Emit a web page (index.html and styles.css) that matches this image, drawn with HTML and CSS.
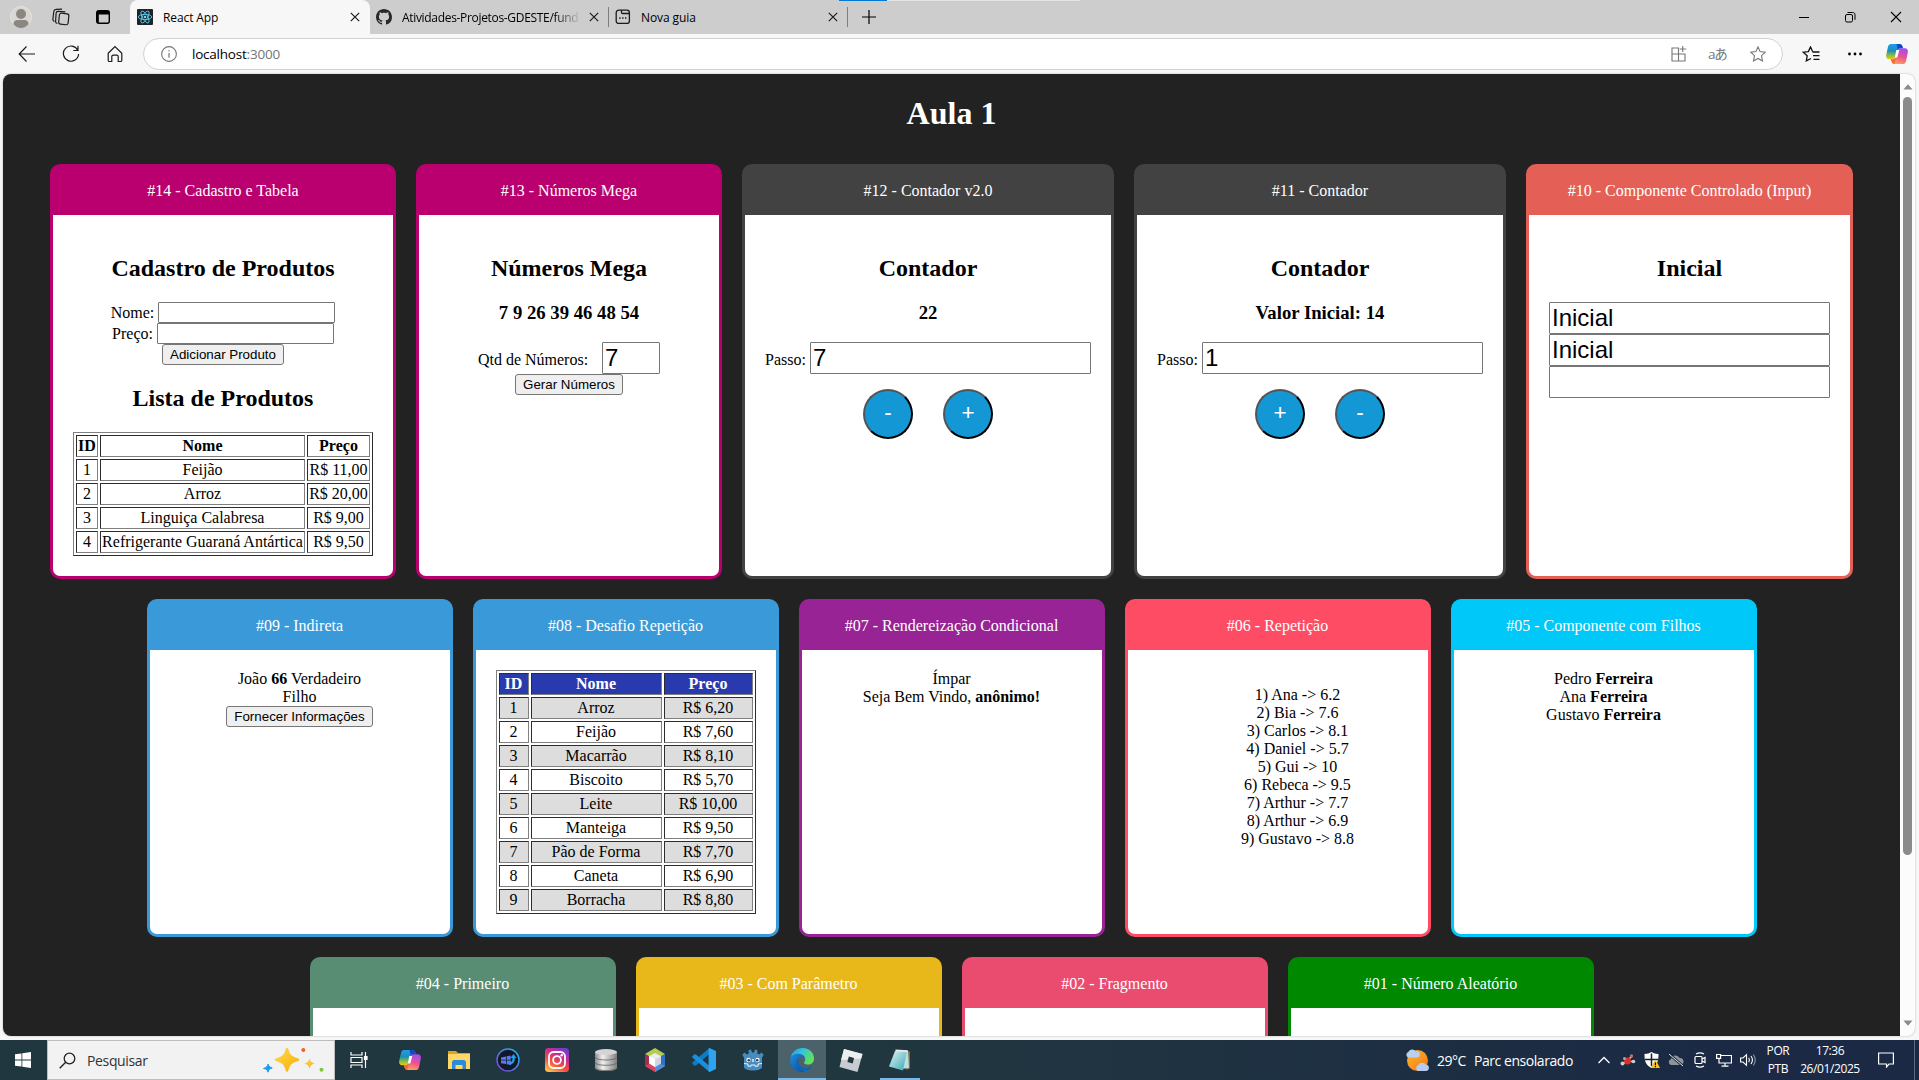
FILE: index.html
```html
<!DOCTYPE html>
<html lang="pt-BR">
<head>
<meta charset="utf-8">
<title>React App</title>
<link rel="stylesheet" href="styles.css">
</head>
<body>
<svg class="defs" width="0" height="0" aria-hidden="true">
  <defs>
    <linearGradient id="cpBlue" x1="0" y1="0" x2="0" y2="1"><stop offset="0" stop-color="#1f9cf0"/><stop offset=".45" stop-color="#1b8fb8"/><stop offset=".75" stop-color="#8bbf3a"/><stop offset="1" stop-color="#f5c518"/></linearGradient>
    <linearGradient id="cpPink" x1=".6" y1="0" x2=".3" y2="1"><stop offset="0" stop-color="#a04df0"/><stop offset=".5" stop-color="#ee5290"/><stop offset="1" stop-color="#ffa552"/></linearGradient>
    <linearGradient id="insta" x1=".2" y1="1" x2=".8" y2="0"><stop offset="0" stop-color="#fdc04b"/><stop offset=".35" stop-color="#f7503a"/><stop offset=".65" stop-color="#cf2b8c"/><stop offset="1" stop-color="#6a3fd0"/></linearGradient>
    <linearGradient id="disk" x1="0" y1="0" x2="1" y2="0"><stop offset="0" stop-color="#8d8d8d"/><stop offset=".35" stop-color="#f0f0f0"/><stop offset="1" stop-color="#7f7f7f"/></linearGradient>
    <linearGradient id="edgeTop" x1="0" y1="0" x2="1" y2=".5"><stop offset="0" stop-color="#1f9de0"/><stop offset=".5" stop-color="#36c6d8"/><stop offset="1" stop-color="#62e05a"/></linearGradient>
    <linearGradient id="edgeLow" x1="0" y1="0" x2="1" y2="1"><stop offset="0" stop-color="#1b8be0"/><stop offset="1" stop-color="#0c4f9c"/></linearGradient>
    <linearGradient id="star" x1="0" y1="0" x2="1" y2="1"><stop offset="0" stop-color="#ffd84a"/><stop offset="1" stop-color="#f5b10c"/></linearGradient>
    <linearGradient id="sun" x1="0" y1="0" x2="1" y2="1"><stop offset="0" stop-color="#ffb52b"/><stop offset="1" stop-color="#f07a17"/></linearGradient>
    <linearGradient id="note" x1="0" y1="0" x2="1" y2="1"><stop offset="0" stop-color="#d9f3f5"/><stop offset="1" stop-color="#3fa7b5"/></linearGradient>
    <linearGradient id="ring" x1="0" y1="1" x2="1" y2="0"><stop offset="0" stop-color="#7a3fe0"/><stop offset="1" stop-color="#22b8e8"/></linearGradient>
    <symbol id="copilot" viewBox="0 0 22 20">
      <path d="M5 0h8.500c1.700 0 2.500 1 3 2.500l.4 1.500h-2.400c-1.600 0-2.300.8-2.700 2.200L10 12.500c-.5 1.800-1.400 2.700-3 2.700H3C.8 15.200-.2 13.300.2 11L2 2.800C2.500.9 3.500 0 5 0z" fill="url(#cpBlue)"/>
      <path d="M10.500 0h3c1.700 0 2.500 1 3 2.500l.5 2h-2.500c-1.400 0-2 .6-2.500 1.700z" fill="#1646c8"/>
      <path d="M17 20H8.500c-1.700 0-2.400-1-2.900-2.500l-.8-2.300h2.300c1.600 0 2.400-.9 2.900-2.700l1.800-6.300c.5-1.500 1.200-1.900 2.700-1.900H19c2.200 0 3.200 1.900 2.800 4.200L20 17.200c-.5 1.900-1.500 2.800-3 2.800z" fill="url(#cpPink)"/>
      <path d="M4.800 15.200h2.300c1.500 0 2.300-.8 2.800-2.300L8.500 20c-1.700 0-2.400-1-2.900-2.500z" fill="#f5693c"/>
      <path d="M10.300 6h3l-2 7.500H8.800z" fill="#fff"/>
    </symbol>
    <symbol id="close" viewBox="0 0 10 10"><path d="M.8.8l8.400 8.400M9.200.8L.8 9.200" stroke="#1b1b1b" stroke-width="1.200" fill="none"/></symbol>
  </defs>
</svg>

<header class="tabstrip">
  <div class="window-tools">
    <svg class="avatar" viewBox="0 0 22 22"><circle cx="11" cy="11" r="10.500" fill="#dad6d2" stroke="#e6e2dc"/><circle cx="11" cy="8" r="5" fill="#8c8680"/><path d="M3.500 18.200c0-3 2-4.200 4-4.200h7c2 0 4 1.200 4 4.200A10.500 10.500 0 0 1 11 22a10.500 10.500 0 0 1-7.500-3.800z" fill="#8c8680"/></svg>
    <svg class="workspaces" viewBox="0 0 18 18" fill="none" stroke="#1b1b1b" stroke-width="1.200"><rect x="7" y="5.500" width="9.500" height="11" rx="2" transform="rotate(6 12 11)"/><path d="M5.500 15.500c-1.400-.3-2-1-1.900-2.300l.5-8c.1-1.300.9-2 2.200-1.900l7 .5M2.500 13.500C1.200 13 .7 12.200.9 11l.9-7.500C2 2 2.700 1.400 4 1.400l6-.3"/></svg>
    <svg class="vtabs" viewBox="0 0 14 14"><rect x=".7" y=".7" width="12.600" height="12.600" rx="2" fill="none" stroke="#000" stroke-width="1.400"/><path d="M1 1h12v3.500H1zM1 4h1.800v9H1z"/></svg>
  </div>
  <div class="tab tab-active">
    <svg class="favicon" viewBox="0 0 16 16"><rect width="16" height="16" rx="1" fill="#20232a"/><g fill="none" stroke="#61dafb" stroke-width=".8"><ellipse cx="8" cy="8" rx="6.700" ry="2.600"/><ellipse cx="8" cy="8" rx="6.700" ry="2.600" transform="rotate(60 8 8)"/><ellipse cx="8" cy="8" rx="6.700" ry="2.600" transform="rotate(120 8 8)"/></g><circle cx="8" cy="8" r="1.300" fill="#61dafb"/></svg>
    <span class="tab-title">React App</span>
    <svg class="tab-close"><use href="#close"/></svg>
  </div>
  <div class="tab">
    <svg class="favicon" viewBox="0 0 16 16"><path fill="#24292f" d="M8 0C3.580 0 0 3.580 0 8c0 3.540 2.290 6.530 5.470 7.590.4.070.55-.17.55-.38 0-.19-.01-.82-.01-1.490-2.010.37-2.530-.49-2.690-.94-.09-.23-.48-.94-.82-1.130-.28-.15-.68-.52-.01-.53.63-.01 1.080.58 1.230.82.720 1.210 1.870.87 2.330.66.070-.52.280-.87.510-1.070-1.780-.2-3.640-.89-3.640-3.950 0-.87.310-1.590.82-2.150-.08-.2-.36-1.020.08-2.120 0 0 .67-.21 2.200.82.640-.18 1.320-.27 2-.27s1.360.09 2 .27c1.530-1.040 2.200-.82 2.200-.82.440 1.100.16 1.920.08 2.120.51.560.82 1.270.82 2.150 0 3.070-1.870 3.750-3.650 3.950.29.250.54.730.54 1.480 0 1.070-.01 1.930-.01 2.200 0 .21.150.46.550.38A8.010 8.010 0 0 0 16 8c0-4.420-3.580-8-8-8z"/></svg>
    <span class="tab-title tab-fade">Atividades-Projetos-GDESTE/fund</span>
    <svg class="tab-close"><use href="#close"/></svg>
  </div>
  <div class="tab tab-sep">
    <svg class="favicon" viewBox="0 0 16 16" fill="none" stroke="#1b1b1b" stroke-width="1.300"><rect x="1.200" y="1.200" width="13.200" height="13.200" rx="2.500"/><path d="M6.500 1v2.300c0 .8.400 1.200 1.200 1.200h6.500M4.200 9h1.400M7.100 9h1.400M10 9h1.400" /></svg>
    <span class="tab-title">Nova guia</span>
    <svg class="tab-close"><use href="#close"/></svg>
  </div>
  <div class="newtab"><svg viewBox="0 0 14 14"><path d="M7 0v14M0 7h14" stroke="#000" stroke-width="1.200"/></svg></div>
  <div class="progress"><i></i></div>
  <div class="win-buttons">
    <svg viewBox="0 0 12 12"><path d="M1 6.500h10" stroke="#000"/></svg>
    <svg viewBox="0 0 12 12" fill="none" stroke="#000"><rect x="1.500" y="3.500" width="7" height="7.500" rx="1.500"/><path d="M3.500 1.500h5c1.500 0 2.500.8 2.500 2.300v5"/></svg>
    <svg viewBox="0 0 12 12"><path d="M1 1l10 10M11 1L1 11" stroke="#000" stroke-width="1.100"/></svg>
  </div>
</header>

<nav class="toolbar">
  <div class="nav-buttons">
    <svg viewBox="0 0 18 18"><path d="M17 9H1.500M8.500 1.500L1.200 9l7.300 7.500"/></svg>
    <svg viewBox="0 0 18 18"><path d="M15.800 5.200A7.600 7.600 0 1 0 16.600 9M16 .8v4.700h-4.700"/></svg>
    <svg viewBox="0 0 18 18"><path d="M2.200 8.200L9 1.600l6.800 6.600v7c0 .8-.4 1.300-1.200 1.300h-2.400v-5c0-1-.5-1.400-1.400-1.400H7.200c-.9 0-1.400.4-1.400 1.400v5H3.400c-.8 0-1.200-.5-1.200-1.300z"/></svg>
  </div>
  <div class="address">
    <svg class="info" viewBox="0 0 16 16"><circle cx="8" cy="8" r="7.400" fill="none" stroke="#767676" stroke-width="1.100"/><path d="M8 7v4.800M8 4.200v1.300" stroke="#767676" stroke-width="1.200"/></svg>
    <span class="url">localhost<b>:3000</b></span>
    <div class="address-icons">
      <svg viewBox="0 0 16 16"><path d="M8 2H1v13h13V8H1M7.500 2v13M11.700 0v6M8.700 3h6.500"/></svg>
      <span class="translate">aあ</span>
      <svg viewBox="0 0 16 16"><path d="M8 .9l2.100 4.700 5.200.6-3.800 3.500 1 5.200L8 12.400l-4.500 2.500 1-5.200L.7 6.200l5.200-.6z"/></svg>
    </div>
  </div>
  <div class="tool-icons">
    <svg viewBox="0 0 18 16"><path d="M9 12.500l-4.700 2.400.9-5.200L1.200 6.200l5.200-.6L8.500.9l2.100 4.500M10.500 6h7M11 9.700h6.500M11.500 13.300h6" fill="none" stroke="#111" stroke-width="1.300"/></svg>
    <svg viewBox="0 0 18 16"><circle cx="3.500" cy="8" r="1.400"/><circle cx="9" cy="8" r="1.400"/><circle cx="14.500" cy="8" r="1.400"/></svg>
    <svg class="copilot-btn"><use href="#copilot"/></svg>
  </div>
</nav>

<main class="viewport">
  <div class="page">
    <h1>Aula 1</h1>
    <div class="cards">
      <section class="card magenta w346">
        <div class="title">#14 - Cadastro e Tabela</div>
        <div class="content">
          <h2>Cadastro de Produtos</h2>
          <div class="field"><label>Nome: </label><input type="text"></div>
          <div class="field"><label>Preço: </label><input type="text"></div>
          <div class="field"><button class="plain b122">Adicionar Produto</button></div>
          <h2>Lista de Produtos</h2>
          <table border="1" class="products">
            <colgroup><col class="c22"><col class="c205"><col></colgroup>
            <tr><th>ID</th><th>Nome</th><th>Preço</th></tr>
            <tr><td>1</td><td>Feijão</td><td>R$ 11,00</td></tr>
            <tr><td>2</td><td>Arroz</td><td>R$ 20,00</td></tr>
            <tr><td>3</td><td>Linguiça Calabresa</td><td>R$ 9,00</td></tr>
            <tr><td>4</td><td>Refrigerante Guaraná Antártica</td><td>R$ 9,50</td></tr>
          </table>
        </div>
      </section>
      <section class="card magenta">
        <div class="title">#13 - Números Mega</div>
        <div class="content">
          <h2>Números Mega</h2>
          <h3>7 9 26 39 46 48 54</h3>
          <div class="big-field"><label>Qtd de Números: </label><input class="short" type="text" value="7"></div>
          <div class="field"><button class="plain b108">Gerar Números</button></div>
        </div>
      </section>
      <section class="card gray w372">
        <div class="title">#12 - Contador v2.0</div>
        <div class="content">
          <h2>Contador</h2>
          <h3>22</h3>
          <div class="big-field"><label>Passo: </label><input type="text" value="7"></div>
          <div class="steps"><button>-</button><button>+</button></div>
        </div>
      </section>
      <section class="card gray w372">
        <div class="title">#11 - Contador</div>
        <div class="content">
          <h2>Contador</h2>
          <h3>Valor Inicial: 14</h3>
          <div class="big-field"><label>Passo: </label><input type="text" value="1"></div>
          <div class="steps"><button>+</button><button>-</button></div>
        </div>
      </section>
      <section class="card coral w327">
        <div class="title">#10 - Componente Controlado (Input)</div>
        <div class="content">
          <h2>Inicial</h2>
          <div class="stack"><input type="text" value="Inicial"><input type="text" value="Inicial"><input type="text"></div>
        </div>
      </section>

      <section class="card blue">
        <div class="title">#09 - Indireta</div>
        <div class="content">
          <div>João <strong>66</strong> Verdadeiro</div>
          <div>Filho</div>
          <div class="field"><button class="plain b147">Fornecer Informações</button></div>
        </div>
      </section>
      <section class="card blue">
        <div class="title">#08 - Desafio Repetição</div>
        <div class="content">
          <table border="1" class="striped">
            <colgroup><col class="c30"><col class="c131"><col></colgroup>
            <tr><th>ID</th><th>Nome</th><th>Preço</th></tr>
            <tr><td>1</td><td>Arroz</td><td>R$ 6,20</td></tr>
            <tr><td>2</td><td>Feijão</td><td>R$ 7,60</td></tr>
            <tr><td>3</td><td>Macarrão</td><td>R$ 8,10</td></tr>
            <tr><td>4</td><td>Biscoito</td><td>R$ 5,70</td></tr>
            <tr><td>5</td><td>Leite</td><td>R$ 10,00</td></tr>
            <tr><td>6</td><td>Manteiga</td><td>R$ 9,50</td></tr>
            <tr><td>7</td><td>Pão de Forma</td><td>R$ 7,70</td></tr>
            <tr><td>8</td><td>Caneta</td><td>R$ 6,90</td></tr>
            <tr><td>9</td><td>Borracha</td><td>R$ 8,80</td></tr>
          </table>
        </div>
      </section>
      <section class="card purple">
        <div class="title">#07 - Rendereização Condicional</div>
        <div class="content">
          <div>Ímpar</div>
          <div>Seja Bem Vindo, <strong>anônimo!</strong></div>
        </div>
      </section>
      <section class="card red">
        <div class="title">#06 - Repetição</div>
        <div class="content">
          <ul>
            <li>1) Ana -&gt; 6.2</li><li>2) Bia -&gt; 7.6</li><li>3) Carlos -&gt; 8.1</li>
            <li>4) Daniel -&gt; 5.7</li><li>5) Gui -&gt; 10</li><li>6) Rebeca -&gt; 9.5</li>
            <li>7) Arthur -&gt; 7.7</li><li>8) Arthur -&gt; 6.9</li><li>9) Gustavo -&gt; 8.8</li>
          </ul>
        </div>
      </section>
      <section class="card cyan">
        <div class="title">#05 - Componente com Filhos</div>
        <div class="content">
          <div>Pedro <strong>Ferreira</strong></div>
          <div>Ana <strong>Ferreira</strong></div>
          <div>Gustavo <strong>Ferreira</strong></div>
        </div>
      </section>

      <section class="card green"><div class="title">#04 - Primeiro</div><div class="content tall"></div></section>
      <section class="card yellow"><div class="title">#03 - Com Parâmetro</div><div class="content tall"></div></section>
      <section class="card pink"><div class="title">#02 - Fragmento</div><div class="content tall"></div></section>
      <section class="card lime"><div class="title">#01 - Número Aleatório</div><div class="content tall"></div></section>
    </div>
  </div>
  <div class="scrollbar">
    <svg viewBox="0 0 10 6"><path d="M5 .3L9.600 5.600H.4z" fill="#8b8b8b"/></svg>
    <div class="thumb"></div>
    <svg viewBox="0 0 10 6"><path d="M5 5.700L9.600.4H.4z" fill="#8b8b8b"/></svg>
  </div>
</main>

<footer class="taskbar">
  <div class="start"><svg viewBox="0 0 16 16" fill="#fff"><path d="M0 2.300l6.500-.9v6.100H0zM7.300 1.300L16 0v7.500H7.300zM0 8.400h6.500v6.200L0 13.700zM7.300 8.400H16V16l-8.700-1.300z"/></svg></div>
  <div class="search">
    <svg class="lens" viewBox="0 0 17 17"><circle cx="10.500" cy="6.500" r="5.300" fill="none" stroke="#222" stroke-width="1.300"/><path d="M6.700 10.300L.7 16.300" stroke="#222" stroke-width="1.400"/></svg>
    <span>Pesquisar</span>
    <svg class="sparkles" viewBox="0 0 62 26"><path d="M24 2c1.500 6.500 4 9 11 10.800-7 1.700-9.500 4.200-11 10.700-1.500-6.500-4-9-11-10.700C20 11 22.500 8.500 24 2z" fill="url(#star)" stroke="url(#star)" stroke-width="2.500" stroke-linejoin="round"/><path d="M46.500 11c.8 3.500 2 4.700 5.500 5.500-3.500.8-4.700 2-5.500 5.500-.8-3.500-2-4.700-5.500-5.500 3.500-.8 4.700-2 5.500-5.500z" fill="url(#star)"/><path d="M5.200 17c.5 2.500 1.300 3 4 4-2.700.7-3.300 1.500-4.200 4.200C4.200 22.500 3.400 22 .5 21.500c2.900-1 3.700-1.700 4.700-4.500z" fill="#12a0ec" stroke="#12a0ec"/><circle cx="40.300" cy="3" r="2" fill="#f2602c"/><circle cx="58.500" cy="22.700" r="2" fill="#83c341"/></svg>
  </div>
  <div class="apps">
    <div class="app"><svg viewBox="0 0 24 24" fill="none" stroke="#fff" stroke-width="1.200"><path d="M4 4v3h11V4M4 20v-3h11v3M4 9.500h11v5H4zM18.500 4v16"/><path d="M17.500 8.500h2.500v3h-2.500z" fill="#fff"/></svg></div>
    <div class="app"><svg viewBox="0 0 24 24"><use href="#copilot" x="1" y="2" width="22" height="20"/></svg></div>
    <div class="app"><svg viewBox="0 0 24 24"><path d="M1 3h8l2 2h12v4H1z" fill="#e0a21a"/><path d="M1 6h22v15H1z" fill="#ffd668"/><path d="M5 21v-6.500c0-1.500 1-2.500 2.500-2.500h9c1.500 0 2.500 1 2.500 2.500V21h-3.500v-4h-7v4z" fill="#2b8bd8"/></svg></div>
    <div class="app"><svg viewBox="0 0 24 24"><circle cx="12" cy="12" r="11" fill="#131827" stroke="url(#ring)" stroke-width="1.500"/><path d="M5 9.500l5-1v3.300H5zM10.700 8.300l4-.8v4.300h-4zM5 12.500h5v3.600l-5-.8zM10.700 12.500H15V17l-4.300-.8z" fill="#5b79f0"/><path d="M14 15c2.500-1.500 2.500-3 2.500-5h-2l3-4 3 4h-1.700c0 4-1.500 5.500-4.800 7z" fill="#1fa3e8"/></svg></div>
    <div class="app"><svg viewBox="0 0 24 24"><rect width="24" height="24" rx="3.500" fill="url(#insta)"/><g fill="none" stroke="#fff" stroke-width="1.800"><rect x="4" y="4" width="16" height="16" rx="4.500"/><circle cx="12" cy="12" r="3.900"/></g><circle cx="16.700" cy="7.300" r="1.200" fill="#fff"/></svg></div>
    <div class="app"><svg viewBox="0 0 24 24"><path d="M1 4v16c0 4 22 4 22 0V4z" fill="url(#disk)"/><path d="M1 9c0 4 22 4 22 0M1 14.300c0 4 22 4 22 0M1 19.500c0 4 22 4 22 0" fill="none" stroke="#5f5f5f" stroke-width=".8"/><ellipse cx="12" cy="4" rx="11" ry="3" fill="#d4d4d4"/></svg></div>
    <div class="app"><svg viewBox="0 0 24 24"><path d="M12 0l10 6-10 6L2 6z" fill="#b5cc50"/><path d="M2 6l10 6v12L2 18z" fill="#a52d50"/><path d="M22 6l-10 6v12l10-6z" fill="#2f6fc8"/><path d="M2 18l10-5 10 5-10 6z" fill="#d8445c"/><path d="M12 13v11l10-6z" fill="#4b8fe0"/><path d="M12 5l6 3.300v7L12 19l-6-3.700v-7z" fill="#e9edef"/><path d="M6 8.300l6 3.200V19l-6-3.700z" fill="#fff"/><path d="M18 8.300l-6 3.200V19l6-3.700z" fill="#cfd7dc"/></svg></div>
    <div class="app"><svg viewBox="0 0 24 24"><path d="M17.500 0v6L4 17.500l-1.400.2L.3 15.800v-1.300z" fill="#0a7cc9"/><path d="M17.500 24v-6L4 6.500l-1.400-.2L.3 8.200v1.300z" fill="#1a8fdc"/><path d="M17.500 0L24 3v18l-6.500 3c-.6 0-.9-.5-.9-1V1c0-.6.300-1 .9-1z" fill="#2ea3f0"/></svg></div>
    <div class="app"><svg viewBox="0 0 24 24"><path d="M10 1.500l1 3h2l1-3 2.500.8-.2 3.200 1.700 1 2.500-2 2.200 2.300-1.700 3V19c0 2-4.500 3.500-9 3.500S3 21 3 19V9.800l-1.700-3 2.200-2.300 2.500 2 1.700-1-.2-3.200z" fill="#478cbf"/><circle cx="7.500" cy="12" r="2.200" fill="#fff"/><circle cx="16.500" cy="12" r="2.200" fill="#fff"/><circle cx="7.800" cy="12.200" r="1.300" fill="#3c4043"/><circle cx="16.200" cy="12.200" r="1.300" fill="#3c4043"/><path d="M12 11v3" stroke="#fff" stroke-width="1.300"/><path d="M3 15.500l4 .5v2.200h3V17h4v1.200h3V16l4-.5" fill="none" stroke="#fff" stroke-width=".9"/></svg></div>
    <div class="app app-on"><svg viewBox="0 0 24 24"><path d="M.5 10.500C1.500 4 6.500 0 12.500 0 19 0 24 4.500 24 10.500c0 4-2.500 6-5.700 6-2.500 0-4.300-.8-4.300-1.800 0-.7 1.200-1.200 1.200-3.200 0-3-3-4.800-6.700-4.800-3.500 0-6.500 1.500-8 3.800z" fill="url(#edgeTop)"/><path d="M0 12.200C0 8 3.800 5.700 8 5.700c3.500 0 6.200 1.500 7 4-1-1-2.300-1.300-3.500-1.300C8 8.400 6 12 6.800 15.500c.8 4 4.200 7.200 8 7.700C13.900 23.700 13 24 12 24 5.500 24 0 18.700 0 12.200z" fill="url(#edgeLow)"/><path d="M8.900 10.300C7 15.500 10.700 20 15.800 20c2 0 4-.7 5.600-1.900.5-.3.900.1.600.6-1.600 2.600-4.300 4.600-7.200 4.600-4.800-.3-8.300-4.400-8.200-8.800 0-1.700.9-3.300 2.300-4.200z" fill="#1262b5"/></svg></div>
    <div class="app"><svg viewBox="0 0 24 24"><path d="M5 1l18.500 5L18.500 24 .5 19z" fill="#c8ccd2"/><path d="M5 1l18.500 5-1.300 4.500L2 12z" fill="#eceef0"/><path d="M9.800 8.600l5.300 1.500-1.400 5.300-5.300-1.500z" fill="#22363f"/></svg></div>
    <div class="app app-run"><svg viewBox="0 0 24 24"><path d="M18 2.500l4 1v17L18 22z" fill="#8a6a35"/><path d="M8 2.500h12L21 20l-8 1z" fill="#b7dfe4"/><path d="M7 3h12l-4 19.500L1 18.500z" fill="url(#note)"/><path d="M7.500 1.500l12 .8v1.600l-12-.4z" fill="#e8e8e8"/></svg></div>
  </div>
  <div class="tray">
    <svg class="weather" viewBox="0 0 24 24"><circle cx="12.500" cy="12.500" r="10.500" fill="url(#sun)"/><path d="M3 9.500a3 3 0 0 1 .3-5.500A4.500 4.500 0 0 1 11 3.500a3 3 0 0 1 1.500 6z" fill="#b9d0f0"/><path d="M13 23a3.300 3.300 0 0 1 .3-6 4.500 4.500 0 0 1 7.700-.3 3.200 3.200 0 0 1 .5 6.300z" fill="#b4ccf2"/></svg>
    <span class="temp">29°C</span><span class="sky">Parc ensolarado</span>
    <div class="tray-icons">
      <svg viewBox="0 0 16 16"><path d="M2.500 11L8 5.500l5.500 5.500" fill="none" stroke="#fff" stroke-width="1.300"/></svg>
      <svg viewBox="0 0 16 16"><path d="M2 12l5-3M9 9l5 1M8 8l4-4" stroke="#ddd" stroke-width="1.500"/><circle cx="7.500" cy="9" r="3.500" fill="#d8302a"/><circle cx="2.500" cy="11.500" r="2" fill="#ccc"/><circle cx="13.500" cy="9.500" r="1.800" fill="#ccc"/><circle cx="11.500" cy="4" r="1.700" fill="#c66"/><circle cx="4.500" cy="6.500" r="1.500" fill="#a9a9a9"/></svg>
      <svg viewBox="0 0 16 16"><path d="M7.500 0c2 1.300 4 2 7 2 0 7-1 11-7 14-6-3-7-7-7-14 3 0 5-.7 7-2z" fill="#fff"/><path d="M7.500 1.500V14M1 7.500h13" stroke="#14202e" stroke-width="1.500"/><path d="M11.500 7.500l4.500 8.500H6.500z" fill="#f8c21c"/><path d="M11.400 10.500v2.700M11.400 14v1.200" stroke="#000" stroke-width="1.100"/></svg>
      <svg viewBox="0 0 16 16"><path d="M3 13a3 3 0 0 1 0-5.800A4.500 4.500 0 0 1 11.500 6a3.600 3.600 0 0 1 1.500 7z" fill="#8c949e"/><path d="M1 2l14 12" stroke="#16243a" stroke-width="2.400"/><path d="M1 2l14 12" stroke="#e8e8e8" stroke-width="1"/></svg>
      <svg viewBox="0 0 16 16" fill="none" stroke="#fff" stroke-width="1.200"><rect x="3" y="4.500" width="7" height="7" rx="1"/><path d="M10 7l3-1.500v5L10 9M4 2c2.500-1.500 5.500-1.500 8 0M4 14c2.500 1.500 5.500 1.500 8 0"/></svg>
      <svg viewBox="0 0 16 16" fill="none" stroke="#fff" stroke-width="1.200"><path d="M5 3.500h10.500v7.500H3V7M9 11v3M5.500 14.200h7M.6 2.500h4v3.800h-4zM3 6v3"/></svg>
      <svg viewBox="0 0 16 16" fill="none" stroke="#fff" stroke-width="1.100"><path d="M.6 6v4H3l3.500 3.300V2.700L3 6zM8.700 5.700c1 1.500 1 3.100 0 4.600M11 4c1.800 2.500 1.800 5.500 0 8"/><path d="M13.300 2.500c2.500 3.500 2.500 7.500 0 11" stroke="#8c96a5"/></svg>
    </div>
    <div class="two-line lang"><span>POR</span><span>PTB</span></div>
    <div class="two-line clock"><span>17:36</span><span>26/01/2025</span></div>
    <svg class="notice" viewBox="0 0 16 16"><path d="M.6 1h14.800v11H11l-2.500 3v-3H.6z" fill="none" stroke="#fff" stroke-width="1.200"/></svg>
    <div class="show-desktop"></div>
  </div>
</footer>
</body>
</html>
```
FILE: styles.css
```css
* { box-sizing: border-box; }

body {
  margin: 0;
  width: 1919px;
  height: 1080px;
  overflow: hidden;
  display: flex;
  flex-direction: column;
  background: #f7f7f7;
  font-family: "Open Sans", "Noto Sans", sans-serif;
  color: #000;
}

svg { display: block; flex: none; }
.defs { position: absolute; }

/* Tab strip */
.tabstrip {
  height: 34px;
  flex: none;
  display: flex;
  background: #cdcdcd;
  font-size: 12px;
}
.window-tools {
  width: 130px;
  display: flex;
  align-items: center;
  padding-left: 10px;
}
.avatar { width: 22px; height: 22px; }
.workspaces { width: 18px; height: 18px; margin-left: 20px; }
.vtabs { width: 14px; height: 14px; margin-left: 26px; }
.tab {
  width: 238px;
  display: flex;
  align-items: center;
  padding: 0 9px 0 6px;
}
.tab-active {
  width: 240px;
  padding: 0 10px 0 7px;
  background: #f7f7f7;
  border-radius: 8px 8px 0 0;
}
.tab-sep {
  width: 240px;
  padding: 0 10px 0 7px;
  background:
    linear-gradient(#7d7d7d, #7d7d7d) 0 7px / 1px 20px no-repeat,
    linear-gradient(#7d7d7d, #7d7d7d) 100% 7px / 1px 20px no-repeat;
}
.favicon { width: 16px; height: 16px; }
.tab-title {
  flex: 1;
  margin: 0 13px 0 10px;
  white-space: nowrap;
  letter-spacing: -0.1px;
}
.tab-fade {
  margin-right: 8px;
  letter-spacing: -0.32px;
  -webkit-mask-image: linear-gradient(90deg, #000 85%, transparent);
  mask-image: linear-gradient(90deg, #000 85%, transparent);
}
.tab-close { width: 10px; height: 10px; }
.newtab { padding: 10px 14px; }
.newtab svg { width: 14px; height: 14px; }
.progress {
  width: 241px;
  height: 1px;
  margin-left: -51px;
  background: #e4e4e4;
}
.progress i { display: block; width: 48px; height: 1px; background: #0078d4; }
.win-buttons {
  margin-left: auto;
  margin-right: 17px;
  display: flex;
  align-items: center;
  gap: 34px;
}
.win-buttons svg { width: 12px; height: 12px; }

/* Address toolbar */
.toolbar { height: 40px; flex: none; display: flex; align-items: center; }
.nav-buttons { width: 143px; padding-left: 18px; display: flex; gap: 26px; }
.nav-buttons svg { width: 18px; height: 18px; fill: none; stroke: #1b1b1b; stroke-width: 1.2; }
.address {
  width: 1640px;
  height: 32px;
  display: flex;
  align-items: center;
  padding: 0 16px 0 17px;
  background: #fff;
  border: 1px solid #d1d1d1;
  border-radius: 16px;
}
.info { width: 16px; height: 16px; }
.url { margin-left: 15px; font-size: 13.5px; letter-spacing: -0.22px; }
.url b { font-weight: 400; color: #767676; }
.address-icons { margin-left: auto; display: flex; align-items: center; }
.address-icons svg { width: 16px; height: 16px; fill: none; stroke: #767676; stroke-width: 1.1; }
.translate {
  width: 18px;
  margin: 0 24px 0 21px;
  font: 13.5px/20px "Open Sans", "Noto Sans CJK JP", sans-serif;
  letter-spacing: -1.2px;
  color: #767676;
  white-space: nowrap;
}
.tool-icons { display: flex; align-items: center; gap: 26px; margin-left: 19px; }
.tool-icons svg { width: 18px; height: 16px; }
.tool-icons .copilot-btn { width: 22px; height: 20px; margin-left: -4px; }

/* Browser viewport */
.viewport {
  height: 962px;
  flex: none;
  margin: 0 4px 4px 3px;
  display: flex;
  overflow: hidden;
  background: #fcfcfc;
  border-radius: 8px;
  box-shadow: 0 0 2px rgba(0, 0, 0, .3);
}
.page {
  width: 1897px;
  height: 962px;
  flex: none;
  overflow: hidden;
  background: #222;
  font: 16px/18px "Liberation Serif", "Times New Roman", serif;
  text-align: center;
}
h1 { margin: 21.44px 0; color: #fff; font-size: 32px; line-height: 37px; }
h2 { margin: 19.92px 0; font-size: 24px; line-height: 27px; }
h3 { margin: 18.72px 0; font-size: 18.72px; line-height: 21px; }

.cards { display: flex; flex-wrap: wrap; justify-content: center; gap: 20px; margin-top: 31.56px; }
.card {
  width: 306px;
  display: flex;
  flex-direction: column;
  border: 3px solid var(--tone);
  border-radius: 10px;
  background: var(--tone);
}
.w346 { width: 346px; }
.w372 { width: 372px; }
.w327 { width: 327px; }
.title { height: 48px; padding-top: 15px; color: #fff; }
.content { flex: 1; padding: 20px; background: #fff; border-radius: 0 0 7px 7px; }
.content > h2:first-child { margin-top: 20px; }
.tall { min-height: 160px; }

.magenta { --tone: #b9006e; }
.gray { --tone: #424242; }
.coral { --tone: #e45f56; }
.blue { --tone: #3a9ad9; }
.purple { --tone: #982395; }
.red { --tone: #ff4c65; }
.cyan { --tone: #00c8f8; }
.green { --tone: #588c73; }
.yellow { --tone: #e8b71a; }
.pink { --tone: #ea4c6f; }
.lime { --tone: #008800; }

.field { height: 21px; display: flex; justify-content: center; }
.field label { padding-top: 2px; white-space: pre; line-height: 18px; }
input {
  margin: 0;
  padding: 1px 2px;
  border: 1px solid #767676;
  border-radius: 1px;
  background: #fff;
  color: #000;
}
.field input { width: 177px; height: 21px; }
.plain {
  height: 21px;
  padding: 0;
  border: 1px solid #767676;
  border-radius: 3px;
  background: #efefef;
  color: #000;
  font: 13.333px "Liberation Sans", Arial, sans-serif;
}
.b122 { width: 122px; }
.b108 { width: 108px; }
.b147 { width: 147px; }

.big-field { display: flex; justify-content: center; }
.big-field label { padding-top: 9px; white-space: pre; }
.big-field input,
.stack input {
  width: 281px;
  height: 32px;
  font: 24px "Liberation Sans", Arial, sans-serif;
}
.big-field .short { width: 58px; margin-left: 10px; }
.stack { display: flex; flex-direction: column; }

.steps { display: flex; justify-content: center; gap: 30px; padding-top: 15px; }
.steps button {
  width: 50px;
  height: 50px;
  padding: 0 0 1px;
  border: 2px outset #000;
  border-radius: 50%;
  background: #1498d5;
  color: #fff;
  font: 22.4px "Liberation Sans", Arial, sans-serif;
}

table { width: 100%; table-layout: fixed; }
td, th { height: 22px; padding: 1px 0; white-space: nowrap; }
.c22 { width: 22px; }
.c205 { width: 205px; }
.c30 { width: 30px; }
.c131 { width: 131px; }
.striped th { background: #283aae; color: #fff; }
.striped tr:nth-child(even) { background: #ddd; }

ul { margin: 16px 0; padding-left: 40px; list-style: none; }

.scrollbar {
  width: 15px;
  display: flex;
  flex-direction: column;
  align-items: center;
  padding: 10px 0;
}
.scrollbar svg { width: 10px; height: 6px; }
.thumb { width: 9px; height: 758px; margin: 7px 0 auto; border-radius: 5px; background: #8b8b8b; }

/* Taskbar */
.taskbar {
  height: 40px;
  flex: none;
  display: flex;
  background: linear-gradient(90deg, #21373f 0%, #21373f 45%, #1b2a44 88%, #1b2944);
  color: #fff;
}
.start { width: 47px; padding: 12px 0 0 15px; }
.start svg { width: 16px; height: 16px; }
.search {
  width: 288px;
  display: flex;
  align-items: center;
  padding: 0 9px 0 11px;
  background: #f2f2f2;
  border: 1px solid #bdbdbd;
  color: #333;
  font-size: 14px;
  letter-spacing: -0.35px;
}
.lens { width: 17px; height: 17px; }
.search span { margin-left: 11px; }
.sparkles { width: 62px; height: 26px; margin-left: auto; }
.apps { display: flex; gap: 1px; }
.app {
  width: 48px;
  display: flex;
  align-items: center;
  justify-content: center;
}
.app:first-child { width: 50px; padding-right: 2px; }
.app svg { width: 24px; height: 24px; }
.app-on { background: #4b626a; border-bottom: 2px solid #76b9ed; padding-top: 2px; }
.app-run { background: linear-gradient(#76b9ed, #76b9ed) 50% 100% / 40px 2px no-repeat; }
.tray { margin-left: auto; width: 514px; display: flex; align-items: center; font-size: 14px; }
.weather { width: 24px; height: 24px; }
.temp { width: 37px; margin-left: 8px; letter-spacing: -0.5px; }
.sky { width: 122px; letter-spacing: -0.45px; white-space: nowrap; }
.tray-icons { display: flex; gap: 8px; }
.tray-icons svg { width: 16px; height: 16px; }
.two-line {
  display: flex;
  flex-direction: column;
  align-items: center;
  font-size: 12px;
  line-height: 18px;
  letter-spacing: -0.4px;
}
.lang { width: 40px; margin-left: 2px; }
.clock { width: 64px; }
.notice { width: 16px; height: 16px; margin-left: 16px; }
.show-desktop { width: 5px; height: 40px; margin-left: auto; border-left: 1px solid #5c6880; }
```
